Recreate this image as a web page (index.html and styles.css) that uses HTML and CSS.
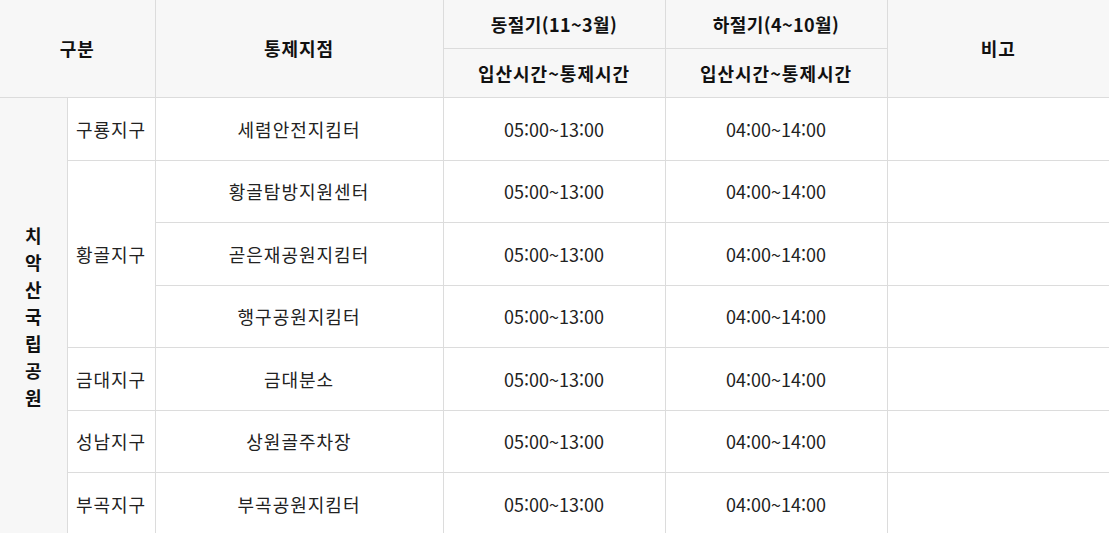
FILE: index.html
```html
<!DOCTYPE html>
<html lang="ko">
<head>
<meta charset="utf-8">
<link rel="stylesheet" href="styles.css">
</head>
<body>
<table class="tbl">
  <colgroup>
    <col class="c1"><col class="c2"><col class="c3"><col class="c4"><col class="c5"><col class="c6">
  </colgroup>
  <thead>
    <tr class="h1">
      <th colspan="2" rowspan="2" class="ko">구분</th>
      <th rowspan="2" class="ko">통제지점</th>
      <th class="mix">동절기(11~3월)</th>
      <th class="mix">하절기(4~10월)</th>
      <th rowspan="2" class="last ko">비고</th>
    </tr>
    <tr class="h2">
      <th class="ko">입산시간~통제시간</th>
      <th class="ko">입산시간~통제시간</th>
    </tr>
  </thead>
  <tbody>
    <tr class="ra">
      <th rowspan="7" class="park"><span class="vert">치악산국립공원</span></th>
      <td class="ko">구룡지구</td>
      <td class="ko">세렴안전지킴터</td>
      <td>05:00~13:00</td>
      <td>04:00~14:00</td>
      <td class="last"></td>
    </tr>
    <tr class="rb">
      <td rowspan="3" class="ko">황골지구</td>
      <td class="ko">황골탐방지원센터</td>
      <td>05:00~13:00</td>
      <td>04:00~14:00</td>
      <td class="last"></td>
    </tr>
    <tr class="ra">
      <td class="ko">곧은재공원지킴터</td>
      <td>05:00~13:00</td>
      <td>04:00~14:00</td>
      <td class="last"></td>
    </tr>
    <tr class="rb">
      <td class="ko">행구공원지킴터</td>
      <td>05:00~13:00</td>
      <td>04:00~14:00</td>
      <td class="last"></td>
    </tr>
    <tr class="ra">
      <td class="ko">금대지구</td>
      <td class="ko">금대분소</td>
      <td>05:00~13:00</td>
      <td>04:00~14:00</td>
      <td class="last"></td>
    </tr>
    <tr class="rb">
      <td class="ko">성남지구</td>
      <td class="ko">상원골주차장</td>
      <td>05:00~13:00</td>
      <td>04:00~14:00</td>
      <td class="last"></td>
    </tr>
    <tr class="ra">
      <td class="ko">부곡지구</td>
      <td class="ko">부곡공원지킴터</td>
      <td>05:00~13:00</td>
      <td>04:00~14:00</td>
      <td class="last"></td>
    </tr>
  </tbody>
</table>
</body>
</html>
```
FILE: styles.css
```css
html, body {
  margin: 0;
  padding: 0;
  background: #fff;
}
body {
  font-family: "Noto Sans CJK KR", "Noto Sans", sans-serif;
  font-size: 18px;
  color: #222;
}
.tbl {
  width: 1109px;
  border-collapse: collapse;
  table-layout: fixed;
}
.c1 { width: 67px; }
.c2 { width: 88px; }
.c3 { width: 288px; }
.c4 { width: 222px; }
.c5 { width: 222px; }
.c6 { width: 222px; }
.tbl th, .tbl td {
  border: 1px solid #dcdcdc;
  text-align: center;
  vertical-align: middle;
  padding: 0;
  line-height: 24px;
}
.tbl thead th {
  border-top: none;
  background: #f7f7f7;
  font-weight: bold;
  color: #111;
}
.tbl tr > :first-child { border-left: none; }
.tbl .last { border-right: none; }
.ko { letter-spacing: 1px; }
.mix { letter-spacing: 0.4px; }
.h1 { height: 48px; }
.h2 { height: 49px; }
.ra { height: 63px; }
.rb { height: 62px; }
.tbl td { color: #222; }
.park {
  background: #f7f7f7;
  font-weight: bold;
  color: #111;
}
.vert {
  display: inline-block;
  width: 1em;
  word-break: break-all;
  line-height: 27px;
}
```
